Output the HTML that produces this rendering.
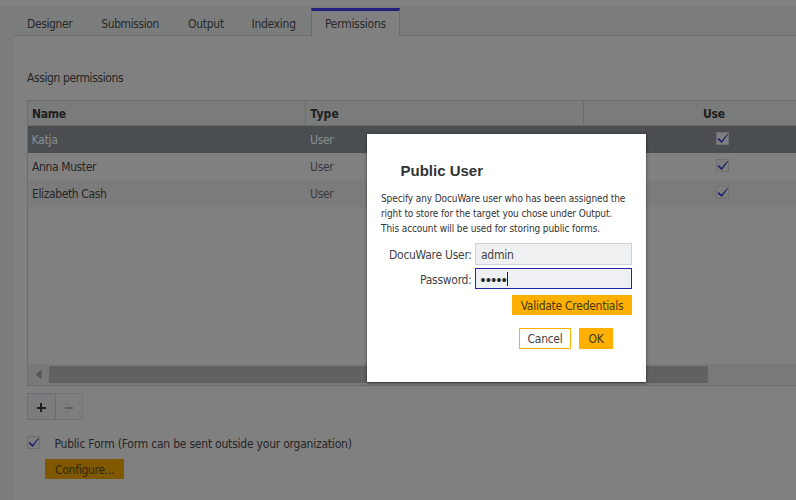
<!DOCTYPE html>
<html>
<head>
<meta charset="utf-8">
<title>Public User</title>
<style>
*{box-sizing:border-box;margin:0;padding:0}
html,body{width:796px;height:500px;overflow:hidden}
body{background:#7b7c7c;font-family:"DejaVu Sans Condensed","Liberation Sans",sans-serif;font-size:12px;letter-spacing:-0.27px;color:#262626;position:relative}
.abs{position:absolute}
.topband{left:0;top:0;width:796px;height:6px;background:#818282;border-bottom:1px solid #7e7f7f}
.panel{left:14px;top:35px;width:800px;height:480px;background:#808080;border-top:1px solid #6b6c6f}
.tab{top:17px;height:14px;line-height:14px;white-space:nowrap;color:#292929}
.tabact{left:311px;top:8px;width:89px;height:28px;background:#808080;border-left:1px solid #6a6b6c;border-right:1px solid #6a6b6c;border-top:3px solid #20207b}
.t{white-space:nowrap;line-height:14px;height:14px}
.grid{left:27px;top:100px;width:800px;height:286px;border:1px solid #6b6c6d;background:#808080}
.hdr{left:28px;top:101px;width:770px;height:24px;background:#7a7b7b}
.hline{left:28px;top:125px;width:770px;height:1px;background:#6b6c6d}
.vsep{top:101px;width:1px;height:24px;background:#6b6c6d}
.row{left:28px;width:770px;height:27px}
.cb{width:13px;height:13px;border:1px solid #6e6f70;background:#7e7e7e}
.cb svg{position:absolute;left:-1px;top:-1px}
.b{font-weight:bold;color:#1f1f1f}
.dlg{left:367px;top:134px;width:279px;height:248px;background:#fff;box-shadow:0 1px 3px rgba(0,0,0,.55)}
.inp{left:108px;width:157px;height:22px;background:#eef0f2;border:1px solid #cfd2d4}
.d{font-size:10px;line-height:15px;height:15px;color:#333;white-space:nowrap;letter-spacing:-0.1px}
.ttl{font-family:"Liberation Sans",sans-serif;font-weight:bold;font-size:15px;line-height:20px;letter-spacing:0;color:#333;white-space:nowrap}
.pw{font-family:"Liberation Sans",sans-serif;font-size:14px;letter-spacing:0.4px;color:#2a2a2a;line-height:16px;height:16px}
.btn{height:20px;background:#ffb000;color:#42381c;text-align:center;line-height:22px;white-space:nowrap;overflow:hidden}
</style>
</head>
<body>
<div class="abs topband"></div>
<div class="abs panel"></div>
<div class="abs tabact"></div>
<div class="abs tab" style="left:27px;letter-spacing:-0.4px">Designer</div>
<div class="abs tab" style="left:101.3px;letter-spacing:-0.42px">Submission</div>
<div class="abs tab" style="left:188px">Output</div>
<div class="abs tab" style="left:251.5px">Indexing</div>
<div class="abs tab" style="left:325px">Permissions</div>

<div class="abs t" style="left:27px;top:71px;letter-spacing:-0.4px">Assign permissions</div>

<div class="abs grid"></div>
<div class="abs hdr"></div>
<div class="abs hline"></div>
<div class="abs vsep" style="left:305px"></div>
<div class="abs vsep" style="left:583px"></div>
<div class="abs t b" style="left:32px;top:107px">Name</div>
<div class="abs t b" style="left:310.3px;top:107px;letter-spacing:0.15px">Type</div>
<div class="abs t b" style="left:703px;top:107px">Use</div>

<div class="abs row" style="top:126px;background:#4b4e50"></div>
<div class="abs row" style="top:153px;background:#808080"></div>
<div class="abs row" style="top:180px;background:#7b7b7b"></div>
<div class="abs t" style="left:31.5px;top:133px;color:#8a8f92">Katja</div>
<div class="abs t" style="left:310px;top:133px;color:#8a8f92">User</div>
<div class="abs t" style="left:32px;top:160px;letter-spacing:-0.38px">Anna Muster</div>
<div class="abs t" style="left:310px;top:160px;color:#3a3a3a">User</div>
<div class="abs t" style="left:32px;top:187px;letter-spacing:-0.38px">Elizabeth Cash</div>
<div class="abs t" style="left:310px;top:187px;color:#3a3a3a">User</div>

<div class="abs cb" style="left:716px;top:132px"><svg width="13" height="13" viewBox="0 0 13 13"><path d="M1.6 7.3 L2.8 6 L5.5 8.7 L11.4 2 L12 2.6 L5.7 11 Z" fill="#1b1b6c"/></svg></div>
<div class="abs cb" style="left:716px;top:159px"><svg width="13" height="13" viewBox="0 0 13 13"><path d="M1.6 7.3 L2.8 6 L5.5 8.7 L11.4 2 L12 2.6 L5.7 11 Z" fill="#1b1b6c"/></svg></div>
<div class="abs cb" style="left:716px;top:186px"><svg width="13" height="13" viewBox="0 0 13 13"><path d="M1.6 7.3 L2.8 6 L5.5 8.7 L11.4 2 L12 2.6 L5.7 11 Z" fill="#1b1b6c"/></svg></div>

<!-- scrollbar -->
<div class="abs" style="left:28px;top:364px;width:770px;height:21px;background:#797979"></div>
<div class="abs" style="left:49px;top:366px;width:659px;height:17px;background:#616161"></div>
<svg class="abs" style="left:35px;top:369px" width="7" height="11" viewBox="0 0 7 11"><path d="M6.5 0.5 L0.8 5.5 L6.5 10.5 Z" fill="#565656"/></svg>

<!-- plus / minus -->
<div class="abs" style="left:56px;top:393px;width:27px;height:27px;background:#7d7e7f;border:1px solid #737577;border-left:none"></div>
<div class="abs" style="left:27px;top:393px;width:29px;height:27px;background:#7a7c7d;border:1px solid #6a6d71"></div>
<div class="abs" style="left:37px;top:407px;width:9px;height:2px;background:#1e1e1e"></div>
<div class="abs" style="left:40px;top:403px;width:2px;height:9px;background:#1e1e1e"></div>
<div class="abs" style="left:65px;top:407px;width:8px;height:2px;background:#5d5e5f"></div>

<!-- public form -->
<div class="abs cb" style="left:26.5px;top:436px"><svg width="13" height="13" viewBox="0 0 13 13"><path d="M1.6 7.3 L2.8 6 L5.5 8.7 L11.4 2 L12 2.6 L5.7 11 Z" fill="#1b1b6c"/></svg></div>
<div class="abs t" style="left:54.5px;top:437px;letter-spacing:-0.22px">Public Form (Form can be sent outside your organization)</div>
<div class="abs" style="left:45px;top:459px;width:79px;height:20px;background:#805800"></div>
<div class="abs t" style="left:55px;top:463px;color:#30280f">Configure...</div>

<!-- dialog -->
<div class="abs dlg">
  <div class="abs ttl" style="left:33.5px;top:27px">Public User</div>
  <div class="abs d" style="left:14px;top:57px">Specify any DocuWare user who has been assigned the</div>
  <div class="abs d" style="left:14px;top:72px">right to store for the target you chose under Output.</div>
  <div class="abs d" style="left:14px;top:87px">This account will be used for storing public forms.</div>
  <div class="abs t" style="left:22px;top:114px;color:#444">DocuWare User:</div>
  <div class="abs inp" style="top:109px"></div>
  <div class="abs t" style="left:114px;top:114px;color:#444">admin</div>
  <div class="abs t" style="left:53px;top:139px;color:#444">Password:</div>
  <div class="abs inp" style="top:134px;height:21px;border-color:#2525a3;background:#eef0f4"></div>
  <div class="abs t pw" style="left:113.6px;top:138px">•••••</div>
  <div class="abs" style="left:140px;top:138px;width:1px;height:14px;background:#222"></div>
  <div class="abs btn" style="left:145px;top:161px;width:120px">Validate Credentials</div>
  <div class="abs btn" style="left:152px;top:194px;width:52px;height:21px;background:#fff;border:1px solid #ffb000;line-height:21px;color:#444">Cancel</div>
  <div class="abs btn" style="left:212px;top:194px;width:34px;height:21px;line-height:23px">OK</div>
</div>
</body>
</html>
